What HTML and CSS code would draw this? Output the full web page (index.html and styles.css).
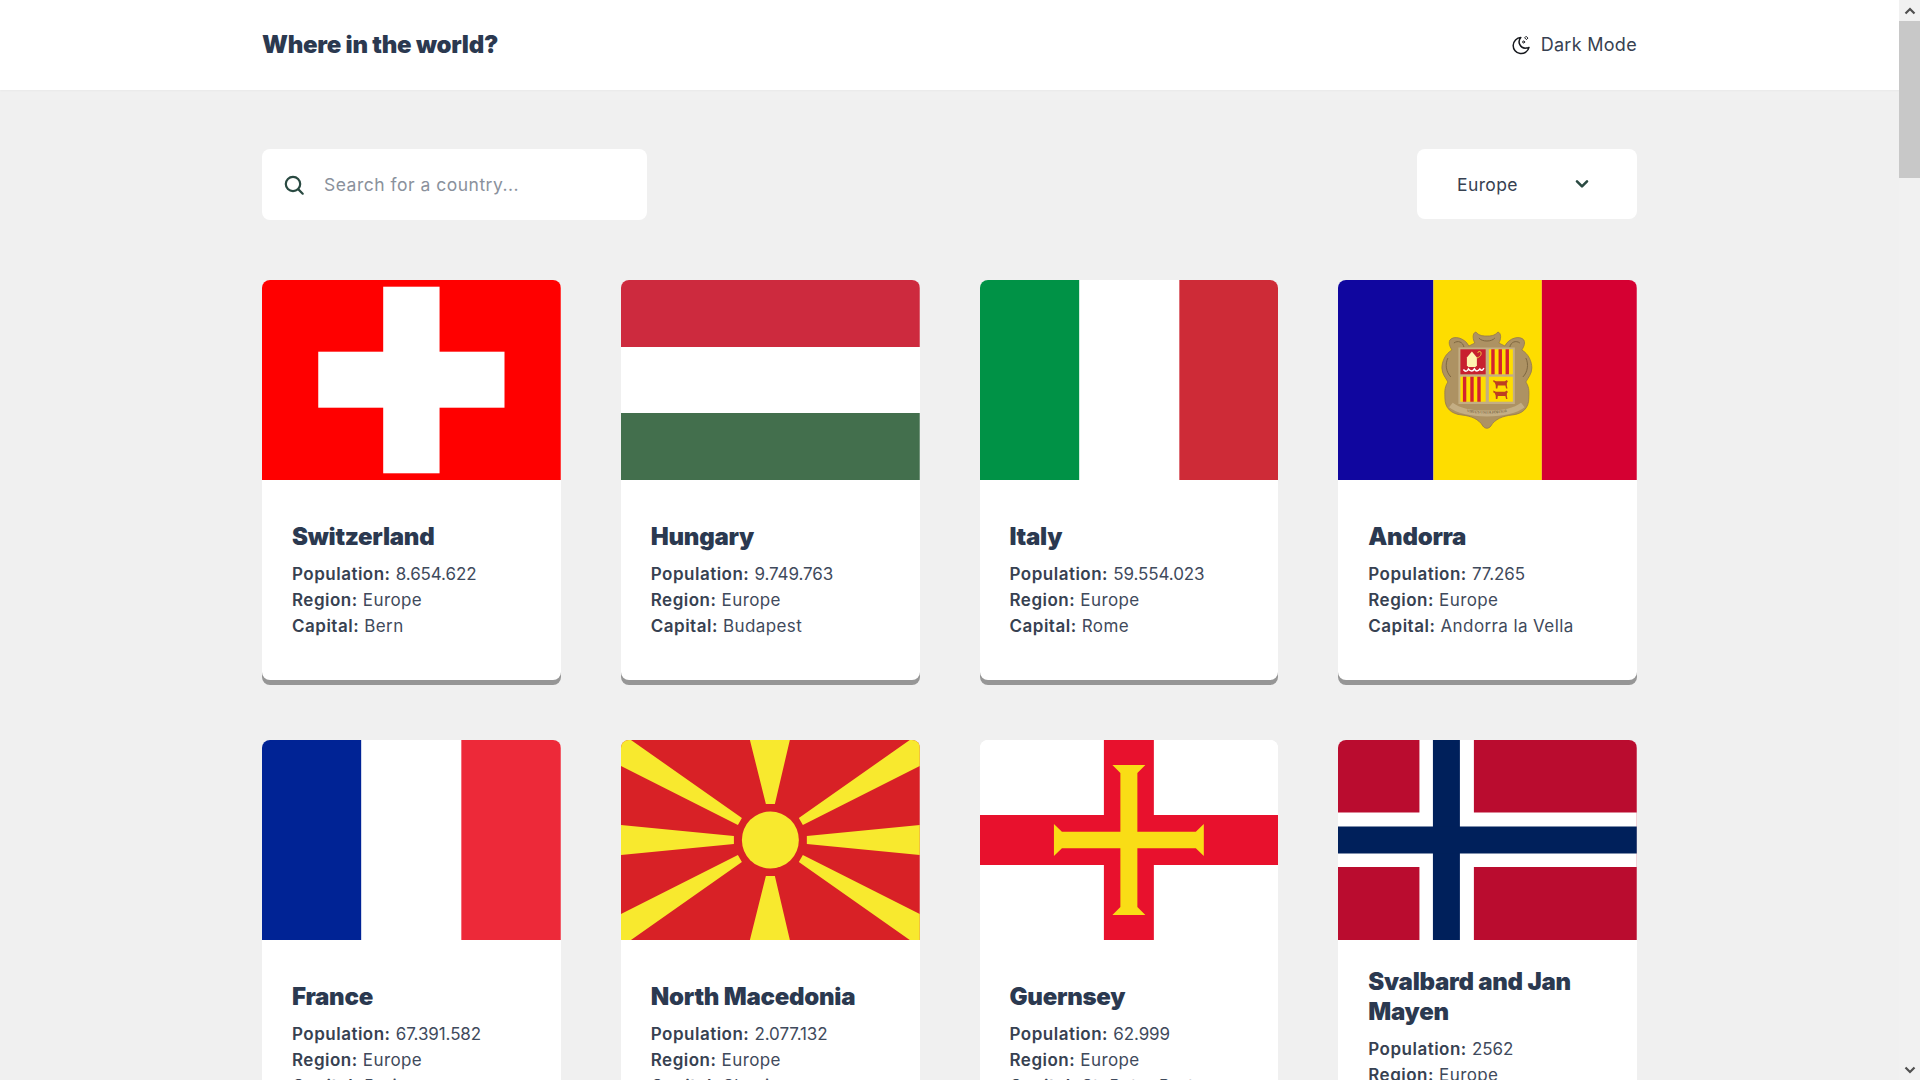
FILE: index.html
```html
<!DOCTYPE html>
<html lang="en">
<head>
<meta charset="utf-8">
<title>Where in the world?</title>
<link rel="stylesheet" href="styles.css">
</head>
<body>
<header class="topbar">
  <div class="wrap topbar-row">
    <h1 class="brand">Where in the world?</h1>
    <button class="mode" type="button">
      <svg class="mode-icon" viewBox="0 0 20 20" fill="none" stroke="#16181d" stroke-width="1.5" stroke-linecap="round" stroke-linejoin="round"><path d="M9.800 2.600A8 8 0 1 0 18 12.400a6.400 6.400 0 0 1-2.900.7A6.300 6.300 0 0 1 9.800 2.600z"/><path d="M15.400 1.600l1.500 1.500-1.500 1.500-1.500-1.500z" stroke-width="1"/><circle cx="12.600" cy="7" r="1" stroke-width="1"/></svg>
      <span>Dark Mode</span>
    </button>
  </div>
</header>
<main class="wrap">
  <section class="filters">
    <label class="search">
      <svg class="search-icon" viewBox="0 0 20 20" fill="none" stroke="#2a4a42" stroke-width="2.200" stroke-linecap="round"><circle cx="9" cy="9" r="7.200"/><path d="M14.400 14.400l4.300 4.300"/></svg>
      <input class="search-input" type="text" placeholder="Search for a country...">
    </label>
    <div class="select">
      <span>Europe</span>
      <svg class="chevron" viewBox="0 0 14 10" fill="none" stroke="#2a4a42" stroke-width="2.600" stroke-linecap="round" stroke-linejoin="round"><path d="M2 2.400l5 5 5-5"/></svg>
    </div>
  </section>
  <section class="grid">
    <article class="card">
      <svg class="flag" viewBox="0 0 299 200" preserveAspectRatio="none"><rect width="299" height="200" fill="#f00"/><rect x="121.300" y="6.700" width="56.400" height="186.600" fill="#fff"/><rect x="56.300" y="71.700" width="186.400" height="56" fill="#fff"/></svg>
      <div class="card-body"><h2>Switzerland</h2><p><b>Population:</b> <span class="num">8.654.622</span></p><p><b>Region:</b> Europe</p><p><b>Capital:</b> Bern</p></div>
    </article>
    <article class="card">
      <svg class="flag" viewBox="0 0 299 200" preserveAspectRatio="none"><rect width="299" height="67" fill="#cd2a3e"/><rect y="67" width="299" height="66" fill="#fff"/><rect y="133" width="299" height="67" fill="#436f4d"/></svg>
      <div class="card-body"><h2>Hungary</h2><p><b>Population:</b> <span class="num">9.749.763</span></p><p><b>Region:</b> Europe</p><p><b>Capital:</b> Budapest</p></div>
    </article>
    <article class="card">
      <svg class="flag" viewBox="0 0 299 200" preserveAspectRatio="none"><rect width="99.500" height="200" fill="#009246"/><rect x="99.500" width="100" height="200" fill="#fff"/><rect x="199.500" width="99.500" height="200" fill="#ce2b37"/></svg>
      <div class="card-body"><h2>Italy</h2><p><b>Population:</b> <span class="num">59.554.023</span></p><p><b>Region:</b> Europe</p><p><b>Capital:</b> Rome</p></div>
    </article>
    <article class="card">
      <svg class="flag" viewBox="0 0 299 200" preserveAspectRatio="none">
        <rect width="95.500" height="200" fill="#10069f"/><rect x="95.500" width="108.500" height="200" fill="#fedd00"/><rect x="204" width="95" height="200" fill="#d50032"/>
        <path d="M149 56C146 56 141 56 138 52C134 53 135 60 137 63L131 66C127 58 116 55 112 60C110 64 113 68 114 70C107 74 104 82 104 88C104 94 108 98 110 102C106 108 107 113 107 118C107 128 113 134 124 135C133 136 141 139 145 146C147 149 151 149 153 146C157 139 165 136 174 135C185 134 191 128 191 118C191 113 192 108 188 102C190 98 194 94 194 88C194 82 191 74 184 70C185 68 188 64 186 60C182 55 171 58 167 66L161 63C163 60 164 53 160 52C157 56 152 56 149 56Z" fill="#ad9263" stroke="#94794c" stroke-width=".8"/>
        <path d="M116 63C120 60 125 62 126 67M182 63C178 60 173 62 172 67M110 78C107 84 108 92 113 97M188 78C191 84 190 92 185 97M141 58C144 62 154 62 157 58" fill="none" stroke="#7e6740" stroke-width="1"/>
        <rect x="120.500" y="67.500" width="56.500" height="56.500" fill="#c4ae84"/>
        <rect x="122.500" y="69.300" width="25.300" height="25" fill="#c8202f"/>
        <path d="M134 71.500l5 6v8l-1.500 1.500h-7L129 85.500v-8z" fill="#fff3b0"/><path d="M139 78c3-1 5-3 4-6-1-1-3-1-3 1" fill="none" stroke="#e8b93a" stroke-width="1"/><path d="M125.500 89.500c2 2.500 4 2 5-.5 2 2.500 4.500 2.500 6 0 1.500 2.500 3.500 2.500 5.500 0 1.500 2 3 1.500 4-1" fill="none" stroke="#fff" stroke-width="1.500"/>
        <rect x="151" y="69.300" width="24" height="25" fill="#fedd00"/><path d="M153.400 69.300h3.400v25h-3.400zM160.700 69.300h3.400v25h-3.400zM167.700 69.300h3.400v25h-3.400z" fill="#d3222f"/>
        <rect x="122.500" y="96.700" width="25.300" height="25" fill="#fedd00"/><path d="M125 96.700h3.400v25H125zM132.400 96.700h3.400v25h-3.400zM139.400 96.700h3.400v25h-3.400z" fill="#d3222f"/>
        <rect x="151" y="96.700" width="24" height="25" fill="#fedd00"/>
        <path d="M155.500 100l2.500 1.200h9l2-1.200 1 1.500-1 1.500v2.500l.6 3h-1.400l-.7-3h-7.500l-.5 3H158l-.2-3.500-1-2.500-1.300-.6zM155.500 110.500l2.500 1.200h9l2-1.200 1 1.500-1 1.500v2.500l.6 3h-1.400l-.7-3h-7.500l-.5 3H158l-.2-3.500-1-2.500-1.300-.6z" fill="#bd3f22"/>
        <path id="mottoLine" d="M113 125C122 132 135 133.500 149 133.500C163 133.500 176 132 185 125" fill="none" stroke="#c4ae84" stroke-width="6"/>
        <text class="motto"><textPath href="#mottoLine" startOffset="50%" text-anchor="middle">VIRTUS UNITA FORTIOR</textPath></text>
      </svg>
      <div class="card-body"><h2>Andorra</h2><p><b>Population:</b> <span class="num">77.265</span></p><p><b>Region:</b> Europe</p><p><b>Capital:</b> Andorra la Vella</p></div>
    </article>
    <article class="card">
      <svg class="flag" viewBox="0 0 299 200" preserveAspectRatio="none"><rect width="99.500" height="200" fill="#002395"/><rect x="99.500" width="100" height="200" fill="#fff"/><rect x="199.500" width="99.500" height="200" fill="#ed2939"/></svg>
      <div class="card-body"><h2>France</h2><p><b>Population:</b> <span class="num">67.391.582</span></p><p><b>Region:</b> Europe</p><p><b>Capital:</b> Paris</p></div>
    </article>
    <article class="card">
      <svg class="flag" viewBox="0 0 299 200" preserveAspectRatio="none">
        <rect width="299" height="200" fill="#d82126"/>
        <g fill="#f8e92e">
          <path d="M129 0h40l-15 64h-9zM129 200h40l-15-64h-9zM0 85l113 11v8L0 115zM299 85l-113 11v8l113 11zM0 0h10l111 78-4 7L0 26zM299 0h-10L178 78l4 7 117-59zM0 200h10l111-78-4-7L0 174zM299 200h-10L178 122l4-7 117 59z"/>
          <circle cx="149.500" cy="100" r="28.500"/>
        </g>
      </svg>
      <div class="card-body"><h2>North Macedonia</h2><p><b>Population:</b> <span class="num">2.077.132</span></p><p><b>Region:</b> Europe</p><p><b>Capital:</b> Skopje</p></div>
    </article>
    <article class="card">
      <svg class="flag" viewBox="0 0 299 200" preserveAspectRatio="none">
        <rect width="299" height="200" fill="#fff"/>
        <rect x="124" width="50" height="200" fill="#e8112d"/><rect y="75" width="299" height="50" fill="#e8112d"/>
        <path d="M132.500 25h33l-8 8v58.700h58.500l8-7.700v32l-8-7.700h-58.500V167l8 8h-33l8-8v-58.700H82L74 116V84l8 7.700h58.500V33z" fill="#f9dd16"/>
      </svg>
      <div class="card-body"><h2>Guernsey</h2><p><b>Population:</b> <span class="num">62.999</span></p><p><b>Region:</b> Europe</p><p><b>Capital:</b> St. Peter Port</p></div>
    </article>
    <article class="card">
      <svg class="flag" viewBox="0 0 299 200" preserveAspectRatio="none">
        <rect width="299" height="200" fill="#ba0c2f"/>
        <rect x="81.500" width="54.500" height="200" fill="#fff"/><rect y="72.500" width="299" height="54.500" fill="#fff"/>
        <rect x="95" width="27" height="200" fill="#00205b"/><rect y="86.500" width="299" height="27" fill="#00205b"/>
      </svg>
      <div class="card-body"><h2>Svalbard and Jan Mayen</h2><p><b>Population:</b> <span class="num">2562</span></p><p><b>Region:</b> Europe</p><p><b>Capital:</b> Longyearbyen</p></div>
    </article>
  </section>
</main>
<aside class="scrollbar" aria-hidden="true">
  <div class="sb-btn"><svg class="sb-arrow" viewBox="0 0 12 8" fill="none" stroke="#505050" stroke-width="2.200"><path d="M1.500 6.500L6 2l4.500 4.500"/></svg></div>
  <div class="sb-track"><div class="sb-thumb"></div></div>
  <div class="sb-btn"><svg class="sb-arrow" viewBox="0 0 12 8" fill="none" stroke="#505050" stroke-width="2.200"><path d="M1.500 1.500L6 6l4.500-4.500"/></svg></div>
</aside>
</body>
</html>
```
FILE: styles.css
```css
* { box-sizing: border-box; }
body { margin: 0; padding-right: 21px; background: #f0f0f0; color: #374151; font-family: Inter, "Noto Sans", sans-serif; }
.wrap { width: 1375px; margin-left: auto; margin-right: auto; }
.topbar { height: 90px; background: #fff; box-shadow: 0 1px 2px rgba(0,0,0,.03); margin-right: -21px; padding-right: 21px; }
.topbar-row { height: 100%; display: flex; align-items: center; justify-content: space-between; padding-bottom: 1px; }
.brand { margin: 0; font-size: 24px; font-weight: 900; color: #2b3950; letter-spacing: -.25px; }
.mode { display: flex; align-items: center; gap: 10px; padding: 0; border: 0; background: none; font: inherit; font-size: 18px; letter-spacing: .3px; color: #374151; }
.mode-icon { width: 20px; height: 20px; }
.filters { display: flex; justify-content: space-between; align-items: flex-start; padding-top: 59px; }
.search { display: flex; align-items: center; width: 385px; height: 71px; background: #fff; border-radius: 8px; padding-left: 22px; gap: 20px; }
.search-icon { width: 20px; height: 20px; flex: none; }
.search-input { border: 0; outline: 0; background: none; width: 300px; font: inherit; font-size: 17.5px; letter-spacing: .5px; color: #374151; padding: 0; }
.search-input::placeholder { color: #8a919c; opacity: 1; }
.select { display: flex; align-items: center; width: 220px; height: 70px; background: #fff; border-radius: 8px; padding: 1px 0 0 40px; font-size: 17.5px; letter-spacing: .4px; color: #374151; }
.chevron { width: 14px; height: 10px; margin-left: 57px; margin-top: -1px; }
.grid { display: grid; grid-template-columns: repeat(4, 298.75px); column-gap: 60px; row-gap: 60px; margin-top: 60px; }
.card { height: 400px; background: #fff; border-radius: 8px; overflow: hidden; box-shadow: 0 5px 0 #969696; display: flex; flex-direction: column; }
.flag { display: block; width: 100%; height: 200px; flex: none; }
.motto { font-size: 3.6px; fill: #5c4a2c; font-family: "Liberation Serif", serif; }
.card-body { flex: 1; display: flex; flex-direction: column; justify-content: center; padding: 0 30px; }
.card-body h2 { margin: 0 0 9.5px; padding-top: 1px; font-size: 24px; line-height: 29.5px; font-weight: 900; letter-spacing: -.25px; color: #2b3950; }
.card-body p { margin: 0; font-size: 17px; line-height: 26px; letter-spacing: .4px; color: #3f4a5c; }
.card-body b { font-weight: 600; letter-spacing: .5px; color: #374151; }
.num { letter-spacing: -.1px; }
.scrollbar { position: fixed; top: 0; right: 0; bottom: 0; width: 21px; display: flex; flex-direction: column; background: #f1f1f1; }
.sb-btn { height: 21px; flex: none; display: flex; align-items: center; justify-content: center; }
.sb-arrow { width: 12px; height: 8px; }
.sb-track { flex: 1; }
.sb-thumb { height: 157px; background: #c8c8c8; }
```
